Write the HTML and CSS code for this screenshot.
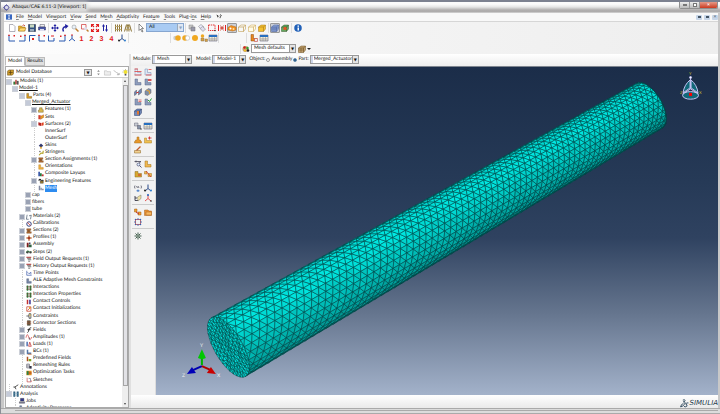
FILE: index.html
```html
<!DOCTYPE html>
<html lang="en">
<head>
<meta charset="utf-8">
<title>Abaqus/CAE 6.11-3 [Viewport: 1]</title>
<link rel="stylesheet" href="styles.css">
</head>
<body>
<header class="titlebar">
  <i data-icon="app"></i>
  <span class="title">Abaqus/CAE 6.11-3 [Viewport: 1]</span>
  <div class="winbtns">
    <button aria-label="Minimize"><span class="g-min"></span></button>
    <button aria-label="Maximize"><span class="g-max"></span></button>
    <button class="close" aria-label="Close">×</button>
  </div>
</header>
<div class="window">
  <nav class="menubar">
    <i data-icon="appblue"></i>
    <button><u>F</u>ile</button><button><u>M</u>odel</button><button>Vie<u>w</u>port</button><button><u>V</u>iew</button><button><u>S</u>eed</button><button>M<u>e</u>sh</button><button><u>A</u>daptivity</button><button>Feat<u>u</u>re</button><button><u>T</u>ools</button><button>Plug-i<u>n</u>s</button><button><u>H</u>elp</button>
    <i data-icon="helpcursor"></i>
    <div class="mdi">
      <button aria-label="Minimize viewport"><span class="g-min"></span></button>
      <button aria-label="Restore viewport"><span class="g-max"></span></button>
      <button aria-label="Close viewport">×</button>
    </div>
  </nav>
  <div class="toolbars">
    <div class="row">
      <div class="group" data-tools="new open save print"></div>
      <div class="group" data-tools="pan rotate zoom zoombox fit updown"></div>
      <div class="group" data-tools="parallel perspective"></div>
      <div class="group"><button class="tool" aria-label="select"><i data-icon="cursor"></i></button>
        <span class="combo filter"><select aria-label="Selection filter"><option>All</option></select></span></div>
      <div class="tools" data-tools="stack layers dashbox reddots paint*"></div>
      <div class="group" data-tools="wirecube hidcube cube"></div>
      <div class="group" data-tools="meshcube* greencube"></div>
      <div class="tools" data-tools="info"></div>
    </div>
    <div class="row">
      <div class="group" data-tools="ax1 ax2 ax3 ax1 ax4 ax2 triad n1 n2 n3 n4 triad2"></div>
      <div class="group orbs" data-tools="orb1 orb2 orb3 orb4 table"></div>
      <div class="group parts" data-tools="part table"></div>
    </div>
    <div class="row third">
      <div class="group"><i data-icon="palette"></i>
        <span class="combo colors"><select aria-label="Color code"><option>Mesh defaults</option></select></span>
        <button class="tool" aria-label="Render style"><i data-icon="brown"></i></button><span class="caret"></span></div>
    </div>
  </div>
  <div class="main">
    <aside class="side">
      <div class="tabs" role="tablist"><button class="on" role="tab">Model</button><button role="tab">Results</button></div>
      <div class="panel">
        <div class="dbbar">
          <i data-icon="db"></i>
          <span class="combo db"><select aria-label="Database"><option>Model Database</option></select></span>
          <i data-icon="spin"></i><i data-icon="folderup"></i><i data-icon="link"></i><i data-icon="bulb"></i>
        </div>
        <div class="treebox">
          <ul class="tree" id="tree"></ul>
          <div class="scroll"><span class="up"></span><span class="thumb"></span><span class="down"></span></div>
        </div>
      </div>
    </aside>
    <div class="splitter"></div>
    <section class="work">
      <form class="context">
        <label for="mod">Module:</label><span class="combo c-mod"><select id="mod"><option>Mesh</option></select></span>
        <label for="mdl">Model:</label><span class="combo c-mdl"><select id="mdl"><option>Model-1</option></select></span>
        <span class="obj">Object:</span>
        <label><input type="radio" name="o">Assembly</label>
        <label class="part"><input type="radio" name="o" checked>Part:</label>
        <span class="combo c-part"><select aria-label="Part"><option>Merged_Actuator</option></select></span>
      </form>
      <div class="stage">
        <div class="toolbox">
          <div data-tools="seedp seede meshp meshr tube1 tube2 del verify bluecube"></div>
          <div data-tools="assign table"></div>
          <div data-tools="stamp stampx edit"></div>
          <div data-tools="vedit lpart block split"></div>
          <div data-tools="xyz triad2 plane redaxis"></div>
          <div data-tools="merge folder dots"></div>
          <div data-tools="gear"></div>
        </div>
        <svg class="viewport" viewBox="155 66 563 329" preserveAspectRatio="none" role="img" aria-label="Meshed cylinder">
          <g id="mesh"></g>
          <g class="axes">
            <path d="M201 365V357" stroke="#00b400"/><path d="M197 358L201 349L205 358Q201 360 197 358Z" fill="#00c800"/>
            <path d="M201 366L192 370" stroke="#0000b0"/><path d="M186 374L191 367L195 373Z" fill="#0000b8" stroke="none"/>
            <path d="M201 366L210 370" stroke="#b00000"/><path d="M215 374L210 367L206 373Z" fill="#c80000"/>
            <text x="199" y="347">Y</text><text x="181" y="377">Z</text><text x="216" y="377">X</text>
          </g>
          <g class="compass">
            <path d="M690 79Q684 84 683 92Q687 89 690 87ZM691 79Q697 84 698 92Q694 89 691 87Z" fill="#126878"/>
            <ellipse cx="690.5" cy="94.500" rx="8" ry="3.800" fill="#126878"/>
            <path d="M690.500 76V88L682.500 93M690.500 88L698.500 93" fill="none"/>
            <circle cx="690.500" cy="76.500" r="1" fill="#fff"/><path d="M689 92h3v3h-3z" fill="#f00" stroke="none"/>
            <text x="689" y="74">Y</text><text x="680" y="93">Z</text><text x="699" y="93">X</text>
          </g>
        </svg>
      </div>
      <footer class="status">
        <svg class="ds" viewBox="0 0 16 16"><path d="M5 2Q9 0 9 3Q8 5 6 5Q11 5 8 9Q5 14 1 14Q2 9 6 8M15 7Q11 6 10 9Q14 10 12 13Q9 15 7 13" fill="none" stroke="#1d3a50" stroke-width="1.500"/></svg>
        <span class="brand">SIMULIA</span>
      </footer>
    </section>
  </div>
</div>
<div class="bottom"><span></span></div>
<script src="app.js"></script>
</body>
</html>
```
FILE: styles.css
```css
* { box-sizing: border-box; }
html, body { height: 100%; margin: 0; }
body {
  display: flex; flex-direction: column; overflow: hidden;
  font: 5px/7px Lato, "Liberation Sans", sans-serif; color: #111; text-rendering: geometricPrecision;
  background: #c8c8c8; border-left: 1px solid #8c8f96;
}
button, select, input { font: inherit; color: inherit; margin: 0; padding: 0; border: 0; background: none; text-rendering: inherit; }
i[data-icon] { display: block; width: 8px; height: 8px; flex: none; font-family: "Liberation Sans", sans-serif; font-style: normal; }
i[data-icon] svg { display: block; width: 100%; height: 100%; overflow: visible; }

.titlebar {
  display: flex; align-items: center; flex: none; height: 13px; padding: 0 2px 0 2px; gap: 2px;
  border-top: 2px solid #7c8190;
  background: linear-gradient(#fbfbfb 0 20%, #e6e6e6 45%, #b5b3b3 70%, #aaa8a8 85%, #d8d8d8);
}
.titlebar i[data-icon] { width: 7px; height: 7px; }
.title { background: #d9d9d9; box-shadow: 0 0 4px 2px #dedede; }
.winbtns { margin-left: auto; align-self: flex-start; display: flex; height: 7px; border: 1px solid #8f8f8f; border-top: 0; border-radius: 0 0 2px 2px; overflow: hidden; }
.winbtns button { width: 10px; display: flex; align-items: center; justify-content: center; border-right: 1px solid #999; background: linear-gradient(#eee, #bbb); line-height: 5px; }
.winbtns .close { width: 17px; border: 0; color: #fff; font-weight: bold; background: linear-gradient(#e59a88, #cc3a20); }
.g-min { width: 4px; height: 2px; border: 1px solid #777; background: #fff; }
.g-max { width: 4px; height: 4px; border: 1px solid #777; background: #fff; }

.window { flex: 1; min-height: 0; display: flex; flex-direction: column; margin: 0 2px 0 3px; background: #f3f3f3; }
.menubar { display: flex; align-items: center; flex: none; height: 9px; padding-left: 2px; background: #f8f8f8; border-bottom: 1px solid #d6d6d6; }
.menubar > button { margin-left: 4px; }
.menubar i[data-icon] { width: 6px; height: 6px; }
.menubar button + i[data-icon] { margin-left: 5px; }
.menubar u { text-underline-offset: 1px; text-decoration-color: #888; }
.mdi { margin-left: auto; display: flex; gap: 2px; }
.mdi button { display: flex; align-items: center; justify-content: center; width: 6px; height: 5px; line-height: 4px; background: #c7d6e8; border-radius: 1px; color: #345; }
.mdi span { width: 3px; height: 2px; border: 0; background: #456; }

.toolbars { flex: none; display: grid; grid-template-rows: 11px 10px 11px; background: linear-gradient(90deg, #fdfdfd, #f4f4f4 50%, #eee); }
.row { display: flex; align-items: center; padding-left: 3px; }
.group, .tools { display: flex; align-items: center; }
.group { padding-right: 1px; border-right: 1px solid #ddd; margin-right: 1px; }
.tool { width: 10px; height: 10px; display: grid; place-items: center; flex: none; }
.tool.down { background: #ccd0d8; border: 1px solid #999; border-radius: 1px; }
.orbs { margin-left: 40px; padding-left: 1px; border-left: 1px solid #ddd; }
.orbs .tool { width: 9px; }
.parts { margin-left: 26px; padding-left: 2px; border-left: 1px solid #ddd; border-right: 0; }
.third .group { margin-left: 233px; padding-left: 1px; border-left: 1px solid #ddd; border-right: 0; }

.combo { position: relative; display: flex; height: 9px; border: 1px solid #999; background: #fff; flex: none; }
.combo select { appearance: none; width: 100%; padding: 0 2px; line-height: 7px; outline: 0; }
.combo::after {
  content: "▼"; position: absolute; right: 0; top: 0; bottom: 0; width: 5px;
  border-left: 1px solid #999; background: #e4e4e4; text-align: center; font: 4px/7px "DejaVu Sans", sans-serif; pointer-events: none;
}
.filter { width: 38px; border-color: #86a6d0; }
.filter select { background: #a9cbf3; }
.filter::after { background: #dfe8f4; border-color: #9ab; color: #8fa4c0; }
.colors { width: 45px; margin: 0 1px; }
.caret { border: 2px solid transparent; border-top-color: #222; border-bottom: 0; }

.main { flex: 1; min-height: 0; display: flex; }
.side { width: 125px; flex: none; display: flex; flex-direction: column; background: #f0f0f0; padding-left: 1px; }
.tabs { display: flex; align-items: flex-end; height: 12px; flex: none; background: #fafafa; }
.tabs button { height: 9px; width: 20px; border: 1px solid #bbb; background: #e0e0e0; }
.tabs .on { height: 10px; background: #fff; border-bottom-color: #fff; }
.panel { flex: 1; min-height: 0; display: flex; flex-direction: column; background: #fff; border: 1px solid #aaa; }
.dbbar { display: flex; align-items: center; height: 11px; flex: none; gap: 2px; padding-left: 1px; border-bottom: 1px solid #ccc; }
.dbbar i[data-icon] { width: 7px; height: 7px; }
.db { width: 79px; border-color: #fff; margin-left: -2px; }
.db select { padding: 0 1px; }
.db::after { border: 1px solid #999; line-height: 5px; width: 6px; }
.treebox { flex: 1; min-height: 0; display: flex; overflow: hidden; }
.tree { flex: 1; min-width: 0; list-style: none; margin: 0 0 -5px; padding: 0; display: grid; grid-auto-rows: minmax(0, 1fr); }
.tree li { display: flex; align-items: center; gap: 1px; white-space: nowrap; }
.tree .l1 { padding-left: 6px; }
.tree .l2 { padding-left: 13px; }
.tree .l3 { padding-left: 19px; }
.tree .l4 { padding-left: 25px; }
.tree i[data-icon] { width: 6px; height: 6px; }
.tree .open { text-decoration: underline; text-underline-offset: 1px; }
.tree .sel { background: #2d8cf0; color: #fff; }
.box { position: relative; width: 6px; height: 7px; flex: none; display: grid; place-items: center; }
.box.leaf { border-left: 1px dotted #ccc; margin-left: 3px; width: 3px; }
.box.plus::before, .box.minus::before { content: ""; width: 4px; height: 4px; border: 1px solid #ccd0d8; background: #9aa2b4; }
.box.minus::before { background: #c4cad8; }
.scroll { width: 6px; flex: none; display: flex; flex-direction: column; align-items: center; background: #eee; padding: 2px 0; gap: 3px; }
.scroll .thumb { flex: 1; width: 5px; margin-bottom: 14px; border: 1px solid #a5a5a5; background: #e2e2e6; }
.up { border: 1px solid transparent; border-bottom: 2px solid #444; border-top: 0; }
.down { border: 1px solid transparent; border-top: 2px solid #444; border-bottom: 0; }
.splitter { width: 2px; flex: none; background: #e0e0e0; }

.work { flex: 1; min-width: 0; display: flex; flex-direction: column; }
.context { display: flex; align-items: center; height: 12px; flex: none; padding: 0 0 1px 2px; background: linear-gradient(#fff, #eee); }
.context label { display: flex; align-items: center; margin-right: 1px; }
.context input { appearance: none; width: 4px; height: 4px; border: 1px solid #999; border-radius: 50%; margin-right: 1px; background: #fff; }
.context input:checked { background: #1c4e80; border-color: #6890b0; }
.context .obj { margin-right: 1px; }
.c-mod { width: 40px; margin-right: 4px; }
.c-mdl { width: 34px; margin-right: 3px; }
.c-part { width: 49px; }
.c-mod select, .c-mdl select, .c-part select { border-left: 2px solid #cdd6ea; }
.c-part select { padding: 0 1px; }
.stage { flex: 1; min-height: 0; display: flex; }
.toolbox { width: 25px; flex: none; background: #f2f2f2; padding-left: 1px; border-right: 1px solid #ddd; }
.toolbox > div { display: flex; flex-wrap: wrap; width: 22px; padding: 1px; border-bottom: 1px solid #ccc; }
.toolbox > div:last-child { border: 0; }
.toolbox > div:nth-child(n+2) { padding: 2px 1px 1px; }
.viewport { flex: 1; min-width: 0; height: 100%; display: block; border-top: 1px solid #7e858f; background: linear-gradient(#1b2d49, #263a57 35%, #2f4260 52%, #65758e 75%, #a3b2ca); }
.axes { stroke-width: 2; font-size: 5px; }
.axes text { fill: #eee; }
.axes text, .compass text { stroke: none; }
.compass { stroke: #c4c4f4; stroke-width: 1; font-size: 4px; }
.compass text { fill: #c8c030; }
.status { height: 13px; flex: none; display: flex; align-items: center; justify-content: flex-end; gap: 1px; padding-top: 3px; background: linear-gradient(#fff, #eaeaea); }
.ds { width: 9px; height: 9px; }
.brand { font: italic 7px/8px "DejaVu Sans", sans-serif; color: #24394a; }
.bottom { flex: none; height: 6px; background: #dcdcdc; border-top: 1px solid #aaa; border-bottom: 1px solid #aaa; padding: 1px 2px 0 14px; }
.bottom span { display: block; height: 1px; background: #aaa; }
```
FILE: app.js
```js
// Line, fill and rectangle helpers for 16x16 icons
const s = (d, c, w = 1.6) => `<path d="${d}" fill="none" stroke="${c}" stroke-width="${w}"/>`;
const f = (d, c, o) => `<path d="${d}" fill="${c}"${o ? ` stroke="${o}" stroke-width="1"` : ''}/>`;
const dot = (x, y, r, c) => `<circle cx="${x}" cy="${y}" r="${r}" fill="${c}"/>`;
const L = (c, o) => f('M2 2h5v7h7v5H2z', c, o);
const cube = (c, o) => f('M1 6L6 2H15V10L11 15H1Z', c, o) + s('M1 6H11V15M11 6L15 2', o, 1.2);
const num = n => `<text x="3" y="13" font-size="14" font-weight="bold" fill="#e01818">${n}</text>`;
const axis = (d, x) => s(d, '#2858b0', 2) + x;
const icons = {
  app: s('M8 1V15M1 8H15', '#3a3a90', 2) + '<circle cx="8" cy="8" r="5" fill="#dde" stroke="#3a3a90" stroke-width="2"/>',
  appblue: f('M0 1h16v14H0z', '#3a68c0') + f('M6 3h4v2H9v6h1v2H6v-2h1V5H6z', '#fff'),
  helpcursor: f('M1 1L8 6L5 7L6 12Z', '#111') + s('M10 4Q13 0 14 4Q13 6 11 8V11', '#111', 2),
  new: f('M3 1h7l4 4v10H3z', '#fff', '#667'),
  open: f('M1 4h6l1 2h6v8H1z', '#e8b030', '#a07010') + f('M4 8h12l-3 6H1z', '#ffd970', '#a07010') + s('M9 3Q12 0 14 4', '#c03020'),
  save: f('M1 1h14v14H1z', '#305080', '#223') + f('M4 1h8v6H4z', '#c8d8c0') + f('M4 10h8v5H4z', '#9ab'),
  print: f('M4 1h9v5H4z', '#eee', '#556') + f('M1 6h14v6H1z', '#4858a8', '#336') + f('M4 10h8v4H4z', '#dde'),
  pan: s('M8 2V14M2 8H14', '#2020a0', 2) + f('M8 0L11 4H5ZM8 16L5 12H11ZM0 8L4 5V11ZM16 8L12 11V5Z', '#2020a0'),
  rotate: s('M5 15Q1 7 10 5', '#2020a0', 3) + f('M8 0L15 4L9 10Z', '#2020a0'),
  zoom: s('M9 9L15 15', '#c08030', 3) + '<circle cx="6" cy="6" r="4" fill="#e8f0f8" stroke="#888"/>',
  zoombox: s('M1 1H10V10H1Z', '#d03030', 1.4) + s('M11 11L15 15', '#c08030', 3) + dot(9, 9, 3, '#dde'),
  fit: s('M1 6V1H6M10 1H15V6M15 10V15H10M6 15H1V10M2 2L6 6M14 2L10 6M2 14L6 10M14 14L10 10', '#e02020', 2.2),
  updown: s('M5 14V3M11 2V13', '#2020a0', 2) + f('M5 0L8 5H2ZM11 16L8 11H14Z', '#2020a0'),
  parallel: s('M3 1V15M7 1V15M11 1V15M15 1V15', '#8a7338', 2) + s('M2 5H15M2 11H15', '#b8a060'),
  perspective: s('M5 1L1 15M7 1L6 15M9 1L10 15M11 1L15 15', '#8a7338', 2) + s('M4 5H12M2 11H14', '#b8a060'),
  cursor: f('M4 0V13L7 10L10 16L12 15L9 9H13Z', '#fff', '#222'),
  stack: f('M2 2h8v8H2z', '#c8c8c8', '#888') + f('M6 6h8v8H6z', '#99a', '#777'),
  layers: f('M1 5L6 1L12 6L7 11Z', '#eef', '#777') + f('M4 9L9 5L15 10L10 15Z', '#dde', '#777'),
  dashbox: '<path d="M1 2H14V13H1Z" fill="none" stroke="#e02020" stroke-width="1.8" stroke-dasharray="3 1.5"/>' + f('M12 12h4l-2 3z', '#222'),
  reddots: s('M1 2V14M15 2V14M4 8H12', '#e02020', 2) + s('M5 3L11 13M11 3L5 13', '#c84030'),
  paint: f('M0 7L6 3L16 6V12L9 14L0 12Z', '#f09020', '#b06818') + dot(5, 9, 2, '#fff') + dot(11, 10, 2, '#ffe0a0'),
  wirecube: cube('none', '#b89038'), hidcube: cube('#fffbe8', '#c8a048'), cube: cube('#f4c030', '#a87818'),
  meshcube: cube('#8ca4d4', '#4860a0') + s('M1 10H11L15 6M4 6V15M8 6V15', '#4860a0', 1),
  greencube: cube('#60a860', '#38582c') + dot(8, 9, 3.5, '#e05828'),
  brown: cube('#c0a070', '#6c5020') + s('M1 10H11M6 6V15', '#6c5020', 1),
  bluecube: cube('#7088b8', '#2c3c68') + f('M6 6h4v7H6z', '#e07830'),
  info: dot(8, 8, 7.5, '#2060b8') + f('M7 7h3v6H7zM7 3h3v2.500H7z', '#fff'),
  ax1: axis('M2 2V14H14', f('M0 4L2 0L4 4ZM11 2h3v3h-3z', '#e02020')),
  ax2: axis('M14 2V14H2', f('M12 4L14 0L16 4ZM4 3h3v3H4z', '#e02020')),
  ax3: axis('M3 15V3H15', f('M8 8h4v4H8z', '#e02020')),
  ax4: axis('M1 3V14H12V8', f('M6 3h6v2H6z', '#e02020')),
  triad: s('M8 2V9L2 14M8 9L14 14', '#2858b0', 2) + dot(8, 2, 1.6, '#e02020'),
  triad2: s('M8 1V9L2 14M8 9L14 14', '#284888', 2) + dot(2, 13, 2, '#222') + dot(14, 13, 2, '#3080d0'),
  n1: num(1), n2: num(2), n3: num(3), n4: num(4),
  orb1: dot(5, 8, 4.5, '#ccc') + dot(10, 8, 5.5, '#f0a820'),
  orb2: dot(6, 8, 5.5, '#f0a820') + '<circle cx="11" cy="8" r="4.500" fill="#fff" stroke="#aaa"/>',
  orb3: dot(8, 8, 6, '#f0a820'),
  orb4: dot(5, 4, 3.5, '#f0a820') + f('M2 8h6v6H2zM10 10h5v5h-5z', '#d8a040', '#875'),
  table: f('M0 2h16v12H0z', '#f4f0d8', '#446') + f('M0 2h16v4H0z', '#2870c0') + s('M1 9.500H15M1 12H15M6 6V14M11 6V14', '#889', 1),
  part: f('M2 1h5v8h7v5H2z', '#e88820', '#8a4a10') + f('M9 9h6v6H9z', '#eee', '#c03030'),
  palette: dot(7, 8, 6, '#c8a070') + dot(5, 5, 2.4, '#d02020') + dot(11, 6, 2.4, '#30a030') + dot(6, 11, 2.2, '#f0c020') + dot(12, 11, 2.5, '#222'),
  db: f('M1 5L4 2H15V11L12 14H1Z', '#c89828', '#5c4010') + s('M4 8H13M8 3V13', '#5c4010'),
  spin: f('M8 2L11 6H5ZM8 14L5 10H11Z', '#888'),
  folderup: f('M1 4h5l1 2h8v8H1z', '#eee', '#aaa'), link: s('M2 3L7 8M8 7L14 13M9 13H14V9', '#aaa', 2),
  bulb: dot(8, 7, 4.5, '#f0e030') + f('M6 11h4v4H6z', '#555') + s('M1 7H3M13 7H15M8 0V2M3 2L5 4M13 2L11 4', '#997'),
  seedp: L('#e8eef8', '#8090b0') + s('M1 2H8M1 7H15M1 14H15', '#e04040', 1.6),
  seede: L('#dce6f4', '#7088b0') + s('M9 3H15M4 14H15', '#e04040', 1.5),
  meshp: L('#8c9cbc', '#5c6888'), meshr: L('#8c9cbc', '#5c6888') + s('M8 4H15', '#d02020', 3),
  tube1: f('M1 8L5 4V12L1 15ZM9 6L15 1V9L9 14Z', '#6c84b0', '#556') + s('M5 9H9', '#d03030', 2),
  tube2: f('M2 6L9 1L14 3V10L7 15L2 13Z', '#8090a8', '#667') + s('M5 4L11 7V12', '#d8a040', 2.5),
  del: L('#8c9cbc', '#5c6888') + s('M9 4H15M9 7H15', '#e05050', 1.5),
  verify: L('#8c9cbc', '#5c6888') + s('M8 4L11 7L15 1', '#20a030', 2),
  assign: f('M1 2h7v6H1z', '#c8ccd4', '#667') + f('M7 7h6v7H7z', '#8894a8', '#556') + dot(14, 14, 1.3, '#222'),
  stamp: f('M6 2h4v6h3v3h2v3H1v-3h2V8h3z', '#e89828', '#a8701c'),
  stampx: f('M1 4h4v5h10v5H1z', '#f0c050', '#a8802c') + s('M8 4H15M11 1V7', '#d03030', 1.8),
  edit: f('M1 9h12v5H1z', '#f0d090', '#88601c') + s('M5 9L13 1', '#c06030', 2.5),
  vedit: s('M1 3H14L8 8M4 1V5', '#445', 1.6) + '<circle cx="9" cy="9" r="3" fill="#def" stroke="#557" stroke-width="1.500"/>' + s('M11 11L15 15', '#557', 2),
  lpart: L('#f0b850', '#a07018'), block: f('M2 3h6v4h7v7H2z', '#d8a830', '#8c6c20') + s('M8 10H14', '#d03030', 2),
  split: f('M1 3h5v5H1zM8 7h7v6H8z', '#f0b850', '#a07018') + s('M4 2L14 14', '#d03030', 1.6),
  xyz: s('M2 3Q0 6 2 9M5 4L7 8M8 4L10 8M14 3Q16 6 14 9', '#445', 1.4) + s('M8 11V16M5 13.500H11', '#2868c0', 1.6),
  plane: s('M2 4V13H8M2 8H6', '#223', 1.6) + f('M7 6L14 2V9L8 14Z', '#f0e0a0', '#776'),
  redaxis: s('M8 2V9L2 14M8 9L14 14', '#e04040', 1.8) + dot(8, 2, 2, '#2060c0') + dot(14, 14, 1.6, '#222'),
  merge: f('M1 2h5v6H1zM8 8h6v6H8z', '#f0a030', '#a05c10') + s('M4 8L10 12', '#c03030', 2),
  folder: f('M1 4h7l2 2h5v9H1z', '#e89030', '#a86420') + f('M4 8h11v6H4z', '#f8b860', '#a86420'),
  dots: s('M3 3H13V13H3Z', '#c03030', 1.4) + [[3, 3], [8, 2], [13, 3], [14, 8], [13, 13], [8, 14], [3, 13], [2, 8]].map(p => dot(p[0], p[1], 1.5, '#3060b0')).join(''),
  gear: s('M8 1V15M1 8H15M3 3L13 13M13 3L3 13', '#456050', 2) + dot(8, 8, 3, '#7a9080'),
  models: f('M1 7h6v8H1z', '#387838') + f('M6 2h4v12H6z', '#c04040') + f('M10 5h5v10h-5z', '#555'),
  parts: f('M2 1h5v8h8v5H2z', '#e0a020', '#5c4010'),
  feat: f('M4 2h7v5h3v7H1V8h3z', '#d8b850', '#5a4a20'), sets: f('M1 3h6v11H1z', '#d04030') + f('M7 6l8-4v7l-8 5z', '#e8a020', '#a04020'),
  surf: f('M1 3l7 2v8l-7-2z', '#b02020') + f('M9 5l6-2v8l-6 2z', '#e04020'),
  skin: f('M8 1L14 7L8 12L2 7Z', '#303870') + f('M6 10h4v5H6z', '#e0a020'), string: s('M3 14L8 8L13 9L14 2', '#b0a020', 3) + dot(5, 4, 2, '#666'),
  sect: f('M2 2h11v4H2zM4 6h6v4H4zM2 10h12v4H2z', '#c07838', '#603818'), orient: L('#f0b040', '#b07818'),
  comp: f('M1 2h4v12H1z', '#2040a0') + f('M5 6h5v8H5z', '#208040') + f('M10 9h5v5h-5z', '#c03030'),
  eng: s('M2 7Q5 1 8 6T14 5', '#222', 3) + f('M6 8h8v6H6z', '#a08030', '#222'), mesht: f('M2 2h4v12H2zM7 7h3v7H7zM11 10h4v4h-4z', '#8088a0'),
  mat: s('M3 2L1 14H7M8 5L14 3L12 14', '#567', 2), calib: '<circle cx="8" cy="8" r="6" fill="#fff" stroke="#283878" stroke-width="2.500"/>' + s('M4 4L12 12', '#d03030', 2),
  prof: s('M8 1V15M1 8H15', '#c07040', 4) + dot(8, 8, 3, '#a03020'), assem: f('M2 2h5v12H2z', '#802020') + f('M7 7h8v7H7z', '#306040') + f('M8 1h4v5H8z', '#446'),
  steps: s('M1 10Q4 2 8 8H15', '#287838', 3) + dot(4, 9, 3, '#444') + dot(12, 9, 3, '#444'),
  out: f('M1 2h13v3H1z', '#b04040') + s('M3 7H13M5 10H14M6 14H11', '#555', 2), time: s('M2 2V14H15M4 6L8 10L13 6V12', '#3858a8', 1.8),
  inter: f('M2 1h4v14H2zM10 1h4v14h-4z', '#289048') + s('M1 5H15M1 11H15', '#703020', 2),
  cc: f('M2 2h4v12H2z', '#c03030') + f('M8 2h5v12H8z', '#6058a8'), ci: s('M2 2H13V14H2ZM4 12L12 4', '#c84830', 2) + dot(10, 5, 2.5, '#e8a020'),
  cons: s('M1 8H8M13 2V14H8V2Z', '#222', 1.8) + f('M9 4h3v3H9z', '#e8c020'), conn: f('M3 1h9v14H3z', '#554') + s('M2 5H14M2 10H14', '#a05030', 2),
  fields: s('M4 15Q7 14 8 5Q9 2 14 2M4 7H12', '#222', 2.4), amp: s('M0 10Q3 -6 7 8T15 8', '#d04040', 1.8) + s('M9 9V15', '#334'),
  loads: f('M1 2h4v12H1z', '#5070b0') + s('M7 14L10 3L14 14Z', '#c03030', 2), bcs: f('M2 2h4v12H2zM6 9h8v5H6z', '#5878a8') + s('M5 14H15', '#d07030', 2),
  pre: f('M2 2h4v12H2z', '#b05020') + f('M7 8h7v6H7z', '#80a020'), rem: s('M2 3H9V13H2ZM2 8H9', '#556', 1.8) + f('M9 8h6v7H9z', '#334'),
  opt: f('M1 2h14v12H1z', '#e09020') + f('M2 3h5v10H2z', '#288048') + s('M7 8H15', '#a02020', 2), sk: s('M3 2V13H14V9', '#c04040', 1.8) + s('M7 4H12V12', '#557', 1.5),
  ann: s('M14 2L5 8L8 14M1 8H6', '#222', 2), anal: f('M1 1h5v14H1zM10 1h5v14h-5z', '#285878') + s('M1 6H15M1 11H15', '#70a0b8', 1.5),
  jobs: f('M4 1h9v7H4z', '#303890', '#223') + f('M1 10h14v4H1z', '#889', '#334'), mesh2: L('#7888a8', '#44506c')
};

for (const box of document.querySelectorAll('[data-tools]')) {
  box.innerHTML += box.dataset.tools.split(' ').map(t => {
    const n = t.replace('*', '');
    return `<button class="tool${n === t ? '' : ' down'}" aria-label="${n}"><i data-icon="${n}"></i></button>`;
  }).join('');
}

// level, toggle (+, - or .), icon, label
const rows = `0 - models Models (1)|1 - _ Model-1|2 - parts Parts (4)|3 - _ Merged_Actuator|4 + feat Features (1)|4 . sets Sets|4 - surf Surfaces (2)|4 . blank InnerSurf|4 . blank OuterSurf|4 . skin Skins|4 . string Stringers|4 + sect Section Assignments (1)|4 . orient Orientations|4 . comp Composite Layups|4 + eng Engineering Features|4 . mesht Mesh|3 + _ cap|3 + _ fibers|3 + _ tube|2 + mat Materials (2)|2 . calib Calibrations|2 + sect Sections (2)|2 + prof Profiles (1)|2 + assem Assembly|2 + steps Steps (2)|2 + out Field Output Requests (1)|2 + out History Output Requests (1)|2 . time Time Points|2 . mesh2 ALE Adaptive Mesh Constraints|2 . inter Interactions|2 . inter Interaction Properties|2 . cc Contact Controls|2 . ci Contact Initializations|2 . cons Constraints|2 . conn Connector Sections|2 + fields Fields|2 + amp Amplitudes (1)|2 + loads Loads (1)|2 + bcs BCs (1)|2 . pre Predefined Fields|2 . rem Remeshing Rules|2 . opt Optimization Tasks|2 . sk Sketches|0 . ann Annotations|0 - anal Analysis|1 . jobs Jobs|1 . mesh2 Adaptivity Processes`;
document.getElementById('tree').innerHTML = rows.split('|').map(r => {
  const [, lv, tog, ic, label] = r.match(/^(\d) (\S) (\S+) (.*)$/);
  const cls = { '+': 'plus', '-': 'minus', '.': 'leaf' }[tog];
  const open = label === 'Model-1' || label === 'Merged_Actuator' ? 'open' : label === 'Mesh' ? 'sel' : '';
  return `<li class="l${lv}"><span class="box ${cls}"></span>${ic === '_' ? '' : `<i data-icon="${ic}"></i>`}<span class="${open}">${label}</span></li>`;
}).join('');

for (const el of document.querySelectorAll('i[data-icon]')) {
  el.innerHTML = `<svg viewBox="0 0 16 16" aria-hidden="true">${icons[el.dataset.icon] || ''}</svg>`;
}

// Cylinder mesh: staggered triangles between the near and far rims
const near = { c: [227.5, 347], a: 34, b: 14 }, far = { c: [649, 105], a: 26, b: 13 };
const u = [-0.5, -0.866], v = [0.87, -0.49], NS = 70, NT = 14, ratio = 1.3;
function surf(t, i) {
  const q = Math.min(1, Math.max(0, t / NS)), k = q * ratio / (q * ratio + 1 - q), th = Math.PI * i / NT;
  const a = near.a + (far.a - near.a) * k, b = near.b + (far.b - near.b) * k;
  return [0, 1].map(n => near.c[n] + (far.c[n] - near.c[n]) * k + a * Math.cos(th) * u[n] + b * Math.sin(th) * v[n]);
}
const tri = (p, col) => `<path d="M${p.map(q => q[0].toFixed(1) + ' ' + q[1].toFixed(1)).join('L')}Z" fill="${col}"/>`;
let seed = 7;
const rnd = () => (seed = (seed * 16807) % 2147483647) / 2147483647;
let out = '';
for (let i = 0; i < NT; i++) {
  const x = (i + 0.5) / NT, l = x < 0.35 ? 230 - (0.35 - x) * 50 : 230 - (x - 0.35) * 160;
  for (let j = 0; j <= NS; j++) {
    const o = i % 2 ? 0.5 : 0, p = 0.5 - o;
    const c = () => { const m = l + (rnd() - 0.5) * 14; return `rgb(0,${m | 0},${m * 0.97 | 0})`; };
    const A = surf(j - o, i), B = surf(j + 1 - o, i), C = surf(j - p, i + 1), D = surf(j + 1 - p, i + 1);
    out += o ? tri([A, B, C], c()) + tri([B, C, D], c()) : tri([A, C, D], c()) + tri([A, B, D], c());
  }
}
// End cap: concentric rings of triangles with slightly scattered inner nodes
const rings = [[near.c]];
for (let r = 1; r <= 6; r++) {
  const n = r * 6, ring = [];
  for (let k = 0; k < n; k++) {
    const th = 2 * Math.PI * k / n, m = r < 6 ? (r + (rnd() - 0.5) * 0.5) / 6 : 1;
    ring.push([0, 1].map(d => near.c[d] + m * (near.a * Math.cos(th) * u[d] + near.b * Math.sin(th) * v[d])));
  }
  rings.push(ring);
}
const cap = () => { const m = 210 + rnd() * 20 | 0; return `rgb(0,${m},${m - 6})`; };
for (let r = 1; r <= 6; r++) for (let g = 0; g < 6; g++) for (let k = 0; k < r; k++) {
  const O = rings[r], I = rings[r - 1], a = O[g * r + k], b = O[(g * r + k + 1) % O.length];
  const c = I[(g * (r - 1) + k) % I.length];
  out += tri([a, b, c], cap());
  if (k < r - 1) out += tri([b, c, I[(g * (r - 1) + k + 1) % I.length]], cap());
}
document.getElementById('mesh').innerHTML = `<g stroke="#004040" stroke-width=".5" stroke-linejoin="round">${out}</g>`;
```
